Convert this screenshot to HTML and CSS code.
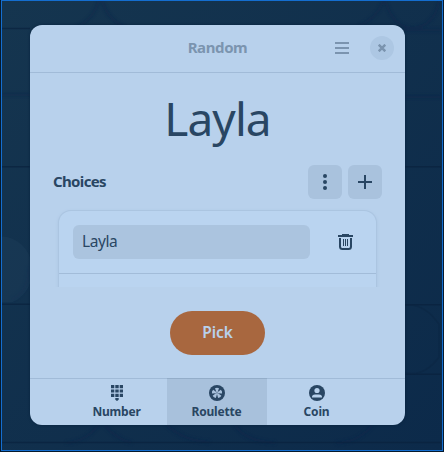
FILE: index.html
```html
<!DOCTYPE html>
<html lang="en">
<head>
<meta charset="utf-8">
<title>Random</title>
<link rel="stylesheet" href="styles.css">
</head>
<body>
<div class="desktop">
  <svg class="wallpaper" viewBox="0 0 444 452" aria-hidden="true">
    <defs>
      <linearGradient id="base" x1="0" y1="0" x2="1" y2="1"><stop offset="0" stop-color="#15354f"/><stop offset="1" stop-color="#0c2a4a"/></linearGradient>
      <filter id="soft" filterUnits="userSpaceOnUse" x="0" y="0" width="444" height="452"><feGaussianBlur stdDeviation="1.5"/></filter>
    </defs>
    <rect width="444" height="452" fill="url(#base)"/>
    <g filter="url(#soft)" fill="none" stroke="#08244a" stroke-width="3" opacity=".45">
      <path d="M100 -10Q100 -6 99 0Q94 20 76 27M102 0Q108 20 125 27M384 0Q380 16 360 26M386 0Q394 28 414 28Q436 26 440 0"/>
      <path d="M2 95H30M405 97H442M405 30H442M12 300Q29 292 29 267"/>
      <path d="M99 425Q88 442 66 444M104 425Q116 440 132 444M166 425Q184 442 210 443M235 425Q244 442 276 444M374 425Q360 443 337 444"/>
    </g>
    <path d="M2 237A31 34 0 0 1 12 303L2 303Z" fill="#1b3b58" opacity=".5"/>
    <g fill="none" stroke="#09213d" stroke-width="1.5" opacity=".65">
      <path d="M2 28.500H30M2 167H30M405 167H442M2 305H30M405 305.500H442M2 443.500H442M405 375H442"/>
      <path d="M405 306Q425 303 440 325V358Q424 379 405 373" opacity=".5"/>
    </g>
  </svg>
  <main class="window">
    <header class="titlebar">
      <h1>Random</h1>
      <div class="controls">
        <svg class="menu" width="14" height="12" viewBox="0 0 14 12"><path d="M0 1h14M0 6h14M0 11h14" stroke="currentColor" stroke-width="2"/></svg>
        <button class="close" aria-label="Close"><svg width="8" height="8" viewBox="0 0 8 8"><path d="M.7.7l6.600 6.600M7.300.7L.7 7.300" stroke="currentColor" stroke-width="2.5"/></svg></button>
      </div>
    </header>
    <section class="content">
      <div class="result">Layla</div>
      <div class="choices">
        <h2>Choices</h2>
        <button class="tool" aria-label="More"><svg width="16" height="16" viewBox="0 0 16 16" fill="currentColor"><circle cx="8" cy="2" r="2"/><circle cx="8" cy="8" r="2"/><circle cx="8" cy="14" r="2"/></svg></button>
        <button class="tool" aria-label="Add"><svg width="16" height="16" viewBox="0 0 16 16"><path d="M1 8h14M8 1v14" stroke="currentColor" stroke-width="2"/></svg></button>
      </div>
      <div class="viewport">
        <div class="list">
          <div class="row">
            <div class="entry"><span>Layla</span></div>
            <svg class="trash" width="15" height="16" viewBox="0 0 15 16" fill="none" stroke="currentColor"><path d="M0 2h15" stroke-width="2"/><path d="M4 .5h7"/><path d="M2 4v8.500q0 2.500 2.500 2.500h6q2.500 0 2.500-2.500V4" stroke-width="2"/><path d="M5.500 5v7M7.500 5v7M9.500 5v7"/></svg>
          </div>
          <div class="row"></div>
        </div>
      </div>
      <button class="pick"><span>Pick</span></button>
    </section>
    <nav class="tabs">
      <a class="tab number"><svg width="16" height="16" viewBox="0 0 16 16" fill="currentColor"><path d="M2 0h3.300v3.300H2zM6.300 0h3.400v3.300H6.300zM10.700 0H14v3.300h-3.300zM2 4.400h3.300v3.200H2zM6.300 4.400h3.400v3.200H6.300zM10.700 4.400H14v3.200h-3.300zM2 8.700h3.300V12H2zM6.300 8.700h3.400V12H6.300zM10.700 8.700H14V12h-3.300zM6.300 13h3.400v1.700L8 16l-1.700-1.300z"/></svg><span>Number</span></a>
      <a class="tab roulette active"><svg width="16" height="16" viewBox="0 0 16 16"><circle cx="8" cy="8" r="8" fill="currentColor"/><g class="cutout"><path id="blade" d="M7.500 7.500L6 3.300Q8 2.200 10 3.300L8.500 7.500z"/><use href="#blade" transform="rotate(72 8 8)"/><use href="#blade" transform="rotate(144 8 8)"/><use href="#blade" transform="rotate(216 8 8)"/><use href="#blade" transform="rotate(288 8 8)"/></g></svg><span>Roulette</span></a>
      <a class="tab coin"><svg width="16" height="16" viewBox="0 0 16 16"><circle cx="8" cy="8" r="8" fill="currentColor"/><g class="cutout"><circle cx="8" cy="5.500" r="2.600"/><path d="M3 12.500V12q0-2.500 3-2.500h4q3 0 3 2.500v.5z"/></g></svg><span>Coin</span></a>
    </nav>
  </main>
</div>
</body>
</html>
```
FILE: styles.css
```css
* { box-sizing: border-box; }
body { margin: 0; background: #061a2d; color: #294663; font-family: "Noto Sans", sans-serif; overflow: hidden; }
button { border: 0; padding: 0; color: inherit; font: inherit; }
h1, h2 { margin: 0; }
svg { display: block; flex: none; }
.desktop { position: relative; width: 444px; height: 452px; padding: 25px 39px 27px 30px; }
.desktop::after { content: ""; position: absolute; inset: 0 1px 1px 1px; border: 1px solid #146ed0; }
.wallpaper { position: absolute; inset: 0; width: 443px; height: 451px; clip-path: inset(0 0 0 1px); }
.window { position: relative; display: flex; flex-direction: column; width: 375px; height: 400px; border-radius: 12px; background: #b8d1ec; overflow: hidden; box-shadow: 0 0 3px #08233e; }
.titlebar { display: grid; grid-template-columns: 1fr auto 1fr; align-items: center; height: 48px; padding-bottom: 2px; border-bottom: 1px solid #a1bbd8; color: #7b94af; }
.titlebar h1 { grid-column: 2; margin-top: -2px; font-size: 15px; line-height: 22px; font-weight: 700; letter-spacing: -.4px; }
.controls { display: flex; align-items: center; justify-content: flex-end; gap: 21px; padding-right: 11px; }
.close { display: grid; place-items: center; width: 24px; height: 24px; border-radius: 50%; background: #adc7e3; }
.content { display: flex; flex-direction: column; height: 305px; }
.result { height: 92px; padding-top: 13px; text-align: center; font-size: 46px; line-height: 64px; letter-spacing: -.9px; }
.choices { display: flex; align-items: center; gap: 6px; height: 34px; padding: 0 23px; }
.choices h2 { flex: 1; margin-top: -2px; font-size: 15px; line-height: 20px; letter-spacing: -.65px; }
.tool { display: grid; place-items: center; width: 34px; height: 34px; border-radius: 6px; background: #a9c2dd; }
.viewport { height: 88px; padding: 12px 23px 0; overflow: hidden; }
.list { width: 317px; margin-left: 6px; border-radius: 12px; background: #bad4f0; box-shadow: 0 0 0 1px #abc5e1, 0 1px 3px 1px #a9c3df; }
.row { display: flex; align-items: center; gap: 28px; height: 62px; padding: 0 14px; }
.row + .row { border-top: 1px solid #a2bcd9; }
.entry { display: flex; align-items: center; width: 237px; height: 34px; padding: 0 0 2px 9px; border-radius: 6px; background: #abc4df; font-size: 15.500px; letter-spacing: -.4px; }
.pick { align-self: center; width: 95px; height: 44px; margin-top: 24px; padding-bottom: 2px; border-radius: 22px; background: #a8673f; color: #b8d1ec; font-size: 15.500px; font-weight: 600; line-height: 22px; letter-spacing: -.1px; }
.tabs { display: flex; justify-content: center; height: 47px; padding-right: 2px; border-top: 1px solid #a1bbd8; }
.tab { display: flex; flex-direction: column; align-items: center; width: 100px; padding-top: 6px; font-size: 12px; font-weight: 700; line-height: 18px; letter-spacing: -.2px; }
.tab span { margin-top: 2px; }
.active { background: #a8c1dc; box-shadow: 0 -1px #93adc9; }
.cutout { fill: #b8d1ec; }
.active .cutout { fill: #a8c1dc; }
```
